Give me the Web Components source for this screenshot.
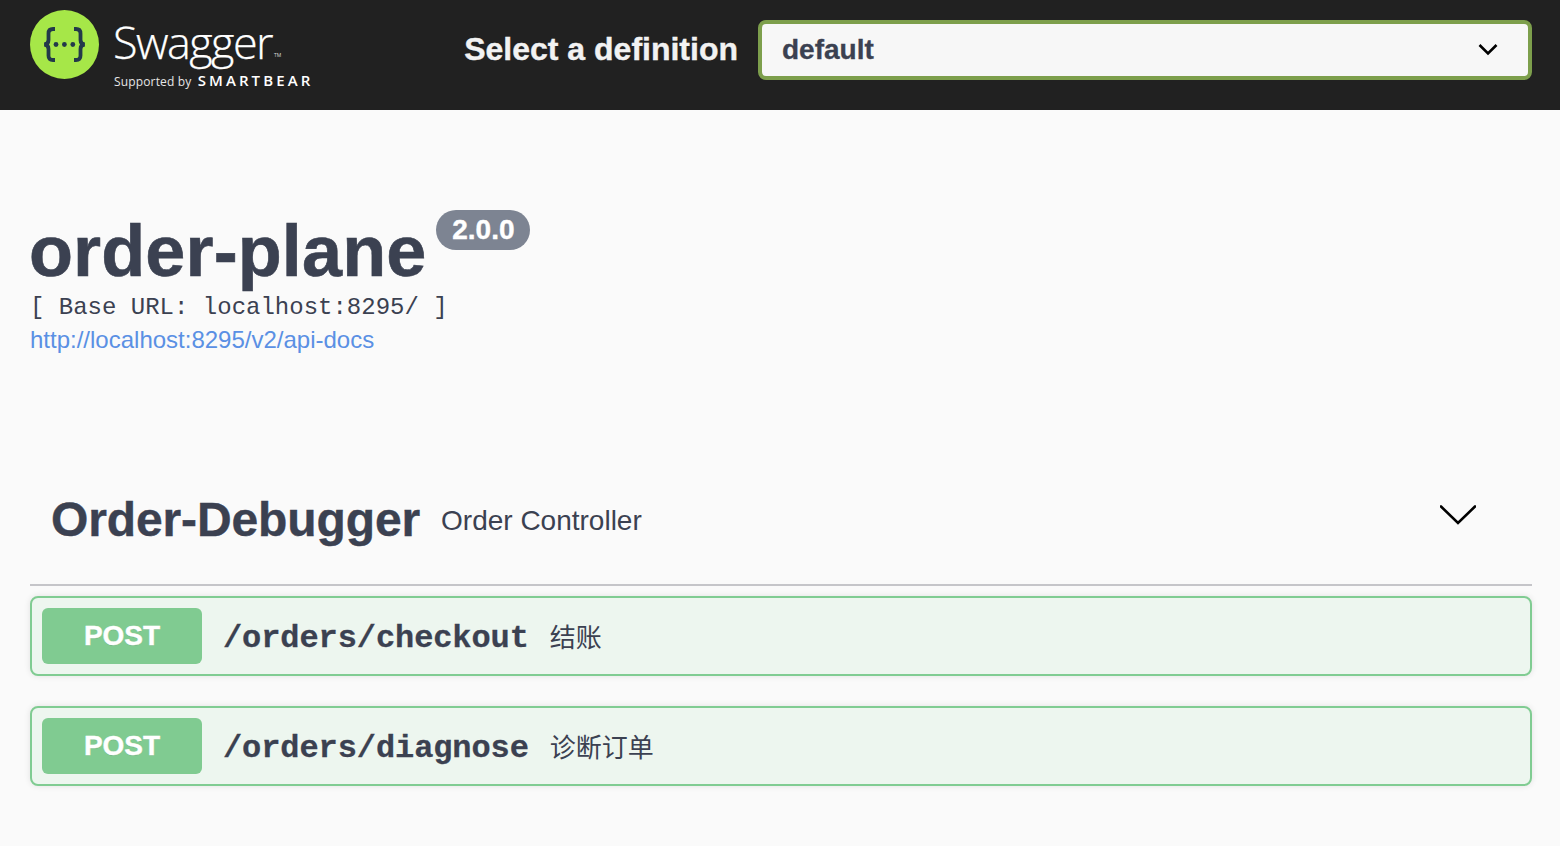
<!DOCTYPE html>
<html lang="en"><head><meta charset="utf-8"><title>Swagger UI</title>
<style>
html,body{margin:0;padding:0;background:#fafafa;}
body{font-family:"Liberation Sans",Arial,sans-serif;color:#3b4151;height:846px;overflow:hidden;}
</style></head><body>
<swagger-topbar></swagger-topbar>
<api-info title-text="order-plane" version="2.0.0" base="[ Base URL: localhost:8295/ ]" link="http://localhost:8295/v2/api-docs"></api-info>
<op-section name="Order-Debugger" desc="Order Controller">
  <op-row path="/orders/checkout" summary="结账"></op-row>
  <op-row path="/orders/diagnose" summary="诊断订单"></op-row>
</op-section>
<script>
class SwaggerTopbar extends HTMLElement{constructor(){super();this.attachShadow({mode:'open'}).innerHTML=`<style>
:host{display:flex;align-items:center;box-sizing:border-box;height:110px;background:#212121;padding:0 28px 10px 30px;}
.logo{display:flex;align-items:flex-start;gap:14px;height:70px;margin-top:-10px;flex:none;}
.logo svg{display:block;width:70px;height:70px;flex:none;}
.words{display:flex;flex-direction:column;color:#fff;font-family:"Open Sans",sans-serif;width:198px;margin-left:-1px;}
.sw{font-size:45px;font-weight:300;line-height:50px;letter-spacing:-1.55px;height:50px;margin-top:7px;position:relative;-webkit-text-stroke:.25px #fff;}
.sw sup{font-size:5px;letter-spacing:0;position:absolute;left:161px;top:34px;line-height:8px;font-weight:400;color:#ddd;-webkit-text-stroke:0;}
.sup{font-size:12px;line-height:18px;white-space:nowrap;color:#e6e6e6;margin-top:4px;letter-spacing:.15px;padding-left:1px;}
.sup b{font-weight:600;font-size:15px;letter-spacing:3.1px;color:#fff;margin-left:3px;}
form{margin-left:auto;display:flex;align-items:center;gap:20px;}
label{font-size:32px;font-weight:700;color:#f2f2f2;white-space:nowrap;margin-top:-2px;-webkit-text-stroke:.4px #f2f2f2;}
.sel{box-sizing:border-box;width:774px;height:60px;border:4px solid #7d9f4c;border-radius:8px;background:#f7f7f7;display:flex;align-items:center;justify-content:space-between;padding:0 30px 0 20px;font-size:28px;font-weight:700;color:#3b4151;-webkit-text-stroke:.3px #3b4151;}
.sel svg{display:block;}
</style>
<div class="logo">
<svg viewBox="0 0 70 70"><circle cx="34.5" cy="34.5" r="34.5" fill="#a6e748"/>
<g fill="none" stroke="#23394a" stroke-width="3.8"><path d="M25 19h-2c-3 0-4.500 1.500-4.500 4.500v6.500c0 2.700-1.300 4.300-4.300 4.500 3 .2 4.300 1.800 4.300 4.500v6.500c0 3 1.500 4.500 4.500 4.500h2"/><path d="M44 19h2c3 0 4.500 1.500 4.500 4.500v6.500c0 2.700 1.300 4.300 4.300 4.500-3 .2-4.300 1.800-4.300 4.500v6.500c0 3-1.500 4.500-4.500 4.500h-2"/></g>
<g fill="#23394a"><circle cx="26" cy="34.5" r="2.4"/><circle cx="34.400" cy="34.5" r="2.4"/><circle cx="42.800" cy="34.5" r="2.4"/></g></svg>
<div class="words"><div class="sw">Swagger<sup>TM</sup></div><div class="sup">Supported by <b>SMARTBEAR</b></div></div>
</div>
<form><label>Select a definition</label><div class="sel"><span>default</span>
<svg width="20" height="20" viewBox="0 0 20 20"><path d="M1.5 5 10 13.5 18.5 5" fill="none" stroke="#000" stroke-width="2.6"/></svg></div></form>`;}}
customElements.define('swagger-topbar',SwaggerTopbar);

class ApiInfo extends HTMLElement{constructor(){super();this.attachShadow({mode:'open'});}
connectedCallback(){const a=k=>this.getAttribute(k);this.shadowRoot.innerHTML=`<style>
:host{display:block;padding:100px 30px 0;height:258px;box-sizing:content-box;}
.t{display:flex;align-items:flex-start;gap:10px;height:84px;}
h2{margin:-1px 0 0 -1px;font-size:72px;font-weight:700;line-height:84px;color:#3b4151;letter-spacing:.12px;-webkit-text-stroke:.6px #3b4151;}
.v{height:40px;line-height:40px;width:94px;text-align:center;border-radius:20px;background:#7d8492;color:#fff;font-size:28px;font-weight:700;-webkit-text-stroke:.4px #fff;}
.b{font-family:"Liberation Mono",monospace;font-size:24px;line-height:28px;margin-top:0;white-space:pre;}
a{display:block;font-size:24px;line-height:36px;color:#5a90e4;text-decoration:none;margin-top:0;}
</style><div class="t"><h2>${a('title-text')}</h2><span class="v">${a('version')}</span></div>
<div class="b">${a('base')}</div><a href="#">${a('link')}</a>`;}}
customElements.define('api-info',ApiInfo);

class OpSection extends HTMLElement{constructor(){super();this.attachShadow({mode:'open'});}
connectedCallback(){const a=k=>this.getAttribute(k);this.shadowRoot.innerHTML=`<style>
:host{display:block;margin:0 28px 0 30px;}
header{box-sizing:border-box;height:118px;display:flex;align-items:center;padding:0 56px 12px 21px;border-bottom:2px solid #c5c5c9;}
h3{margin:0;font-size:48px;font-weight:700;line-height:60px;letter-spacing:-.12px;-webkit-text-stroke:.4px #3b4151;}
small{font-size:28px;margin-left:21px;line-height:40px;margin-top:1px;}
svg{margin-left:auto;display:block;margin-top:-10px;}
.list{display:flex;flex-direction:column;gap:30px;padding-top:10px;}
</style><header><h3>${a('name')}</h3><small>${a('desc')}</small>
<svg width="36" height="20" viewBox="0 0 36 20"><path d="M1 1.5 18 18 35 1.5" fill="none" stroke="#000" stroke-width="2.6" stroke-linecap="round"/></svg></header>
<div class="list"><slot></slot></div>`;}}
customElements.define('op-section',OpSection);

class OpRow extends HTMLElement{constructor(){super();this.attachShadow({mode:'open'});}
connectedCallback(){const a=k=>this.getAttribute(k);this.shadowRoot.innerHTML=`<style>
:host{display:flex;align-items:center;box-sizing:border-box;height:80px;border:2px solid #80cc92;border-radius:8px;background:#edf6ef;padding:0 10px;box-shadow:0 0 6px rgba(0,0,0,.1);}
.m{width:160px;height:56px;line-height:56px;text-align:center;background:#80cb91;border-radius:6px;color:#fff;font-weight:700;font-size:28px;text-shadow:0 1px 0 rgba(0,0,0,.1);-webkit-text-stroke:.4px #fff;}
.p{font-family:"Liberation Mono",monospace;font-weight:700;font-size:32px;margin-left:21px;margin-top:4px;letter-spacing:-.09px;color:#3b4151;-webkit-text-stroke:.3px #3b4151;}
.s{font-family:"Liberation Sans","Noto Sans CJK SC",sans-serif;font-size:26px;margin-left:21px;margin-top:-2px;color:#3b4151;}
</style><span class="m">POST</span><span class="p">${a('path')}</span><span class="s">${a('summary')}</span>`;}}
customElements.define('op-row',OpRow);
</script></body></html>
